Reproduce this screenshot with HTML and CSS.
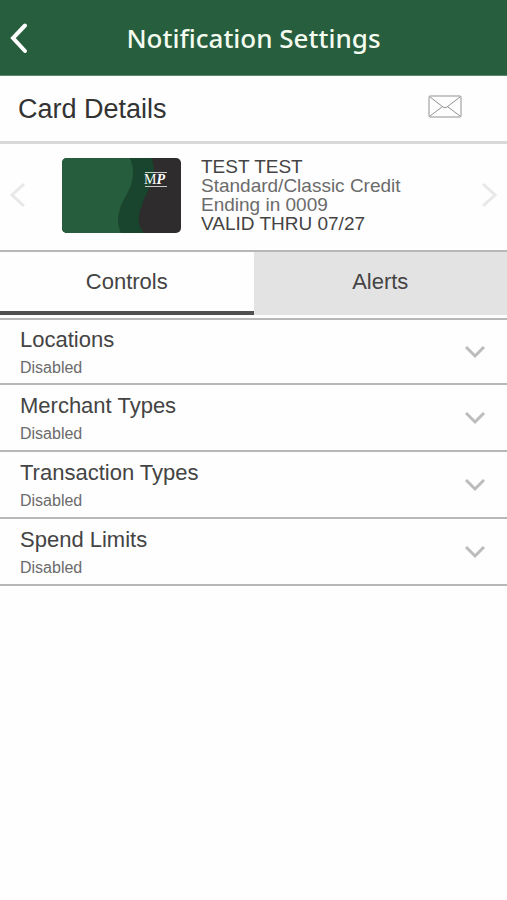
FILE: index.html
```html
<!DOCTYPE html>
<html lang="en">
<head>
<meta charset="utf-8">
<meta name="viewport" content="width=device-width, initial-scale=1">
<title>Notification Settings</title>
<link rel="stylesheet" href="styles.css">
</head>
<body>
<header class="topbar">
  <button class="icon-button back" type="button" aria-label="Back">
    <svg width="20" height="32" viewBox="0 0 20 32"><path d="M16 3.500 4 16l12 13"/></svg>
  </button>
  <h1 class="title">Notification Settings</h1>
</header>
<main>
  <section class="details-head">
    <h2 class="heading">Card Details</h2>
    <button class="icon-button mail" type="button" aria-label="Messages">
      <svg width="34" height="24" viewBox="0 0 34 24"><rect x="1" y="1" width="32" height="21" rx="1"/><path d="m2 2 13 10q2 1.500 4 0L32 2M2 21l12-9M32 21l-12-9"/></svg>
    </button>
  </section>
  <section class="carousel">
    <button class="icon-button arrow" type="button" aria-label="Previous card">
      <svg width="16" height="26" viewBox="0 0 16 26"><path d="M15 2 3 13l12 11"/></svg>
    </button>
    <svg class="card-art" width="120" height="76" viewBox="0 0 120 76" role="img" aria-label="MP card">
      <defs><clipPath id="card-shape"><rect x="1" y="1" width="119" height="75" rx="5"/></clipPath></defs>
      <g clip-path="url(#card-shape)">
        <path fill="#2e2c2c" d="M0 0h120v76H0z"/>
        <path fill="#19442d" d="M0 0h90c4 9 4 18 0 27-4 10-10 20-12 32-1 7 1 12 5 17H0z"/>
        <path fill="#265e3d" d="M0 0h68c5 8 5 18 2 28-4 11-12 19-13 34 0 6 1 10 3 14H0z"/>
      </g>
      <path stroke="#ccc" d="M84 15.500h22M84 29.500h22"/>
      <text x="83" y="27" class="mark">M<tspan class="mark-slant">P</tspan></text>
    </svg>
    <div class="card-info">
      <p class="strong">TEST TEST</p>
      <p>Standard/Classic Credit</p>
      <p>Ending in 0009</p>
      <p class="strong">VALID THRU 07/27</p>
    </div>
    <button class="icon-button arrow next" type="button" aria-label="Next card">
      <svg width="16" height="26" viewBox="0 0 16 26"><path d="m1 2 12 11L1 24"/></svg>
    </button>
  </section>
  <div class="tabs" role="tablist">
    <button class="tab active" type="button" role="tab" aria-selected="true">Controls</button>
    <button class="tab" type="button" role="tab" aria-selected="false">Alerts</button>
  </div>
  <div class="settings">
    <button class="row" type="button">
      <span class="labels"><span class="name">Locations</span><span class="state">Disabled</span></span>
      <svg width="20" height="14" viewBox="0 0 20 14"><path d="m1 1 9 9 9-9"/></svg>
    </button>
    <button class="row" type="button">
      <span class="labels"><span class="name">Merchant Types</span><span class="state">Disabled</span></span>
      <svg width="20" height="14" viewBox="0 0 20 14"><path d="m1 1 9 9 9-9"/></svg>
    </button>
    <button class="row" type="button">
      <span class="labels"><span class="name">Transaction Types</span><span class="state">Disabled</span></span>
      <svg width="20" height="14" viewBox="0 0 20 14"><path d="m1 1 9 9 9-9"/></svg>
    </button>
    <button class="row" type="button">
      <span class="labels"><span class="name">Spend Limits</span><span class="state">Disabled</span></span>
      <svg width="20" height="14" viewBox="0 0 20 14"><path d="m1 1 9 9 9-9"/></svg>
    </button>
  </div>
</main>
</body>
</html>
```
FILE: styles.css
```css
* {
  box-sizing: border-box;
}

body {
  margin: 0;
  background: #fefefe;
  color: #444;
  font-family: "Liberation Sans", Arial, sans-serif;
}

h1, h2, p {
  margin: 0;
  font-weight: 400;
}

button {
  margin: 0;
  padding: 0;
  border: 0;
  background: none;
  color: inherit;
  font: inherit;
}

svg {
  display: block;
  fill: none;
}

.topbar {
  display: grid;
  grid-template-columns: 40px 1fr 40px;
  align-items: center;
  height: 76px;
  border-bottom: 1px solid #5c8a70;
  background: #275e3e;
}

.back {
  padding-left: 9px;
}

.back svg {
  stroke: #fff;
  stroke-width: 4;
  stroke-linecap: round;
}

.title {
  color: #f4fbef;
  font-family: "Noto Sans", "Open Sans", sans-serif;
  font-size: 26px;
  font-weight: 500;
  line-height: 32px;
  text-align: center;
}

.details-head {
  display: flex;
  align-items: center;
  justify-content: space-between;
  height: 68px;
  padding: 0 45px 0 18px;
  border-bottom: 3px solid #d8d8d8;
}

.heading {
  color: #333;
  font-size: 27px;
  line-height: 32px;
}

.mail {
  padding-bottom: 4px;
}

.mail svg {
  stroke: #929292;
}

.carousel {
  display: flex;
  align-items: center;
  height: 108px;
  padding: 0 9px 4px;
  border-bottom: 2px solid #b8b8b8;
}

.arrow svg {
  stroke: #e8e8e8;
  stroke-width: 3;
}

.next {
  margin-left: auto;
}

.card-art {
  margin: 0 20px 0 36px;
}

.mark {
  fill: #fff;
  font: 400 14px "Liberation Serif", serif;
}

.mark-slant {
  font-style: italic;
  font-weight: 700;
}

.card-info {
  color: #6b6b6b;
  font-size: 19px;
  line-height: 19px;
}

.strong {
  color: #444;
}

.tabs {
  display: grid;
  grid-template-columns: 1fr 1fr;
  height: 63px;
}

.tab {
  padding-bottom: 4px;
  border-bottom: 0 solid #505050;
  background: #e3e3e3;
  font-size: 22px;
}

.active {
  padding-bottom: 0;
  border-bottom-width: 4px;
  background: none;
}

.settings {
  margin-top: 3px;
  border-top: 2px solid #b8b8b8;
}

.row {
  display: flex;
  align-items: center;
  justify-content: space-between;
  width: 100%;
  height: 67px;
  padding: 2px 22px 0 20px;
  border-bottom: 2px solid #b8b8b8;
  text-align: left;
}

.row:first-child {
  height: 65px;
}

.labels {
  display: grid;
}

.name {
  font-size: 22px;
  line-height: 30px;
}

.state {
  color: #6b6b6b;
  font-size: 16px;
  line-height: 26px;
}

.row svg {
  stroke: #bcbcbc;
  stroke-width: 3;
}
```
